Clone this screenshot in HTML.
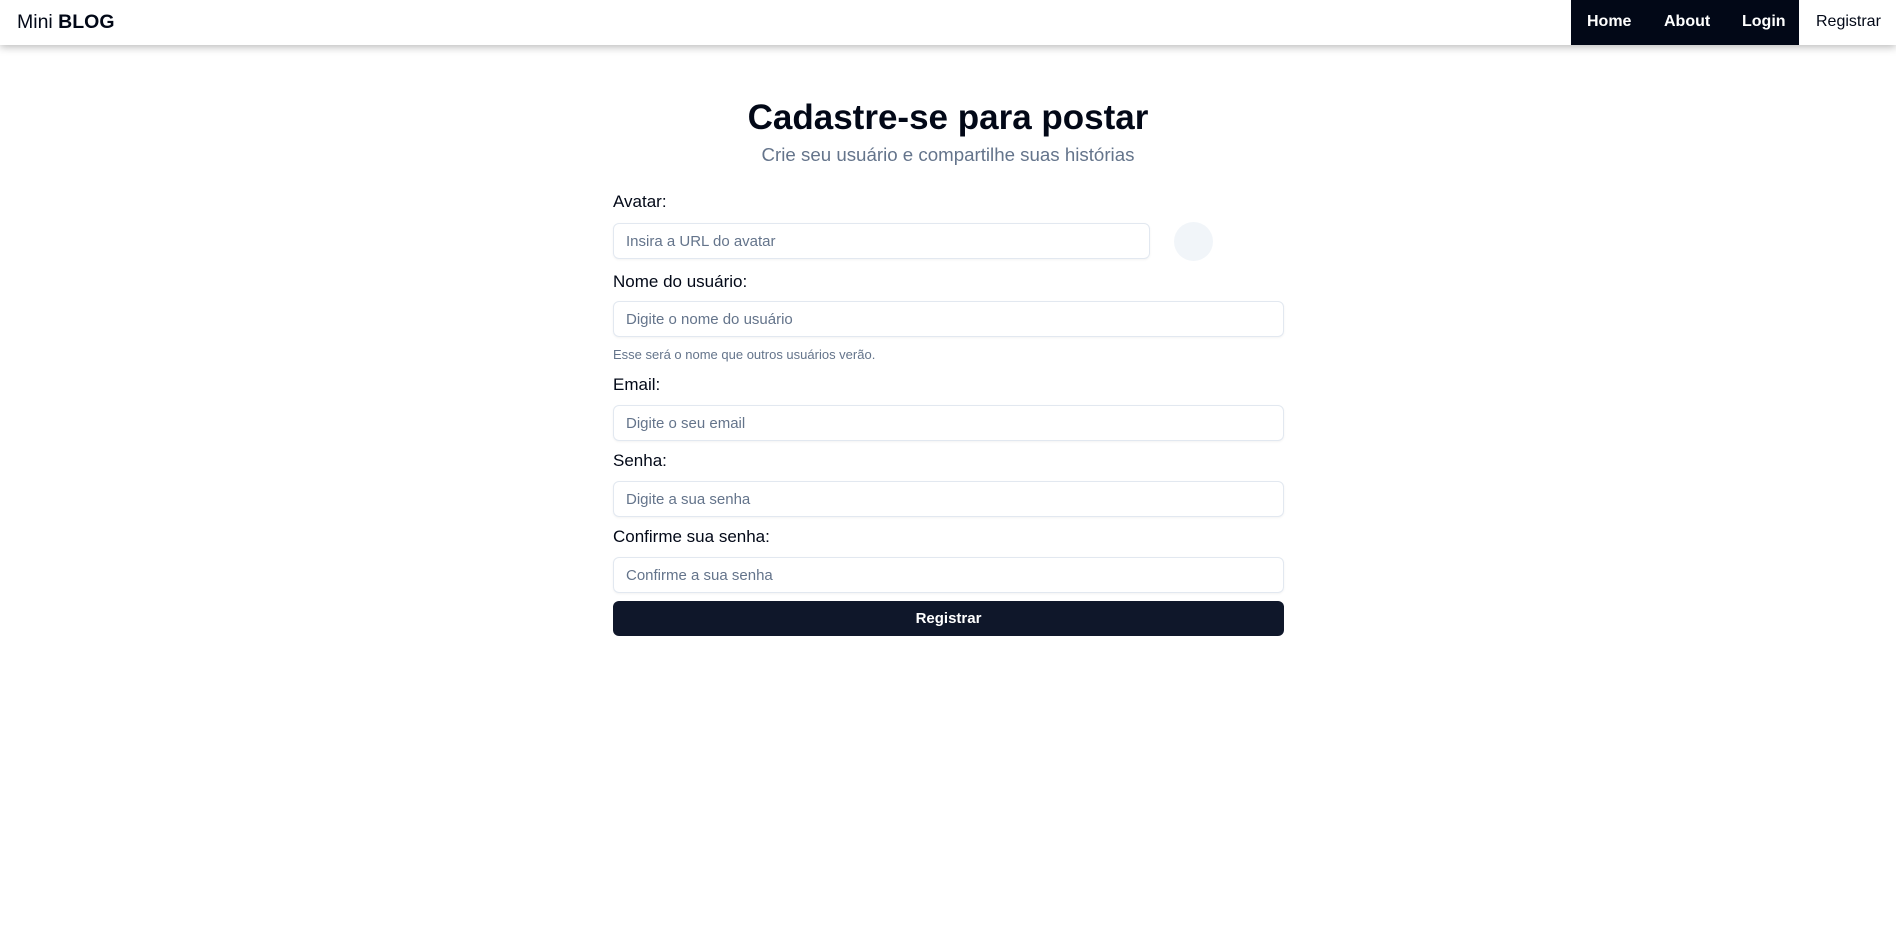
<!DOCTYPE html>
<html><head><meta charset="utf-8"><style>
*{box-sizing:border-box;margin:0;padding:0}
body{width:1896px;height:927px;background:#fff;font-family:"Liberation Sans",sans-serif;color:#020817;position:relative;overflow:hidden}
.nav{position:absolute;left:0;top:0;width:1896px;height:45px;background:#fff;box-shadow:0 2px 8px rgba(0,0,0,.28);z-index:2}
.logo{position:absolute;left:17px;top:11px;font-size:19.5px}
.links{position:absolute;left:1571px;top:0;height:45px;width:228px;background:#020817}
.a{position:absolute;top:13px;font-size:16px;font-weight:bold;color:#fff}
.reg{position:absolute;left:1816px;top:13px;font-size:16px;color:#020817}
h1{position:absolute;left:0;width:1896px;text-align:center;top:98px;font-size:35px;font-weight:bold}
.sub{position:absolute;left:0;width:1896px;text-align:center;top:144px;font-size:18.7px;color:#64748b}
.lbl{position:absolute;left:613px;font-size:17px;color:#020817}
.in{position:absolute;left:613px;width:671px;height:36px;border:1px solid #e2e8f0;border-radius:6px;box-shadow:0 1px 2px rgba(0,0,0,.05);font-size:15px;color:#64748b;padding:9px 0 0 12px}
.hint{position:absolute;left:613px;top:347px;font-size:13px;color:#64748b}
.btn{position:absolute;left:613px;top:601px;width:671px;height:35px;background:#0f172a;border-radius:6px;color:#fff;font-size:15px;font-weight:bold;text-align:center;padding-top:9px}
.circ{position:absolute;left:1174px;top:222px;width:39px;height:39px;border-radius:50%;background:#f1f5f9}
</style></head><body>
<div class="nav"><div class="logo">Mini <b>BLOG</b></div>
<div class="links"><span class="a" style="left:16px">Home</span><span class="a" style="left:93px">About</span><span class="a" style="left:171px">Login</span></div>
<span class="reg">Registrar</span></div>
<h1>Cadastre-se para postar</h1>
<div class="sub">Crie seu usuário e compartilhe suas histórias</div>
<div class="lbl" style="top:192px">Avatar:</div>
<div class="in" style="top:223px;width:537px">Insira a URL do avatar</div>
<div class="circ"></div>
<div class="lbl" style="top:272px">Nome do usuário:</div>
<div class="in" style="top:301px">Digite o nome do usuário</div>
<div class="hint">Esse será o nome que outros usuários verão.</div>
<div class="lbl" style="top:375px">Email:</div>
<div class="in" style="top:405px">Digite o seu email</div>
<div class="lbl" style="top:451px">Senha:</div>
<div class="in" style="top:481px">Digite a sua senha</div>
<div class="lbl" style="top:527px">Confirme sua senha:</div>
<div class="in" style="top:557px">Confirme a sua senha</div>
<div class="btn">Registrar</div>
</body></html>
